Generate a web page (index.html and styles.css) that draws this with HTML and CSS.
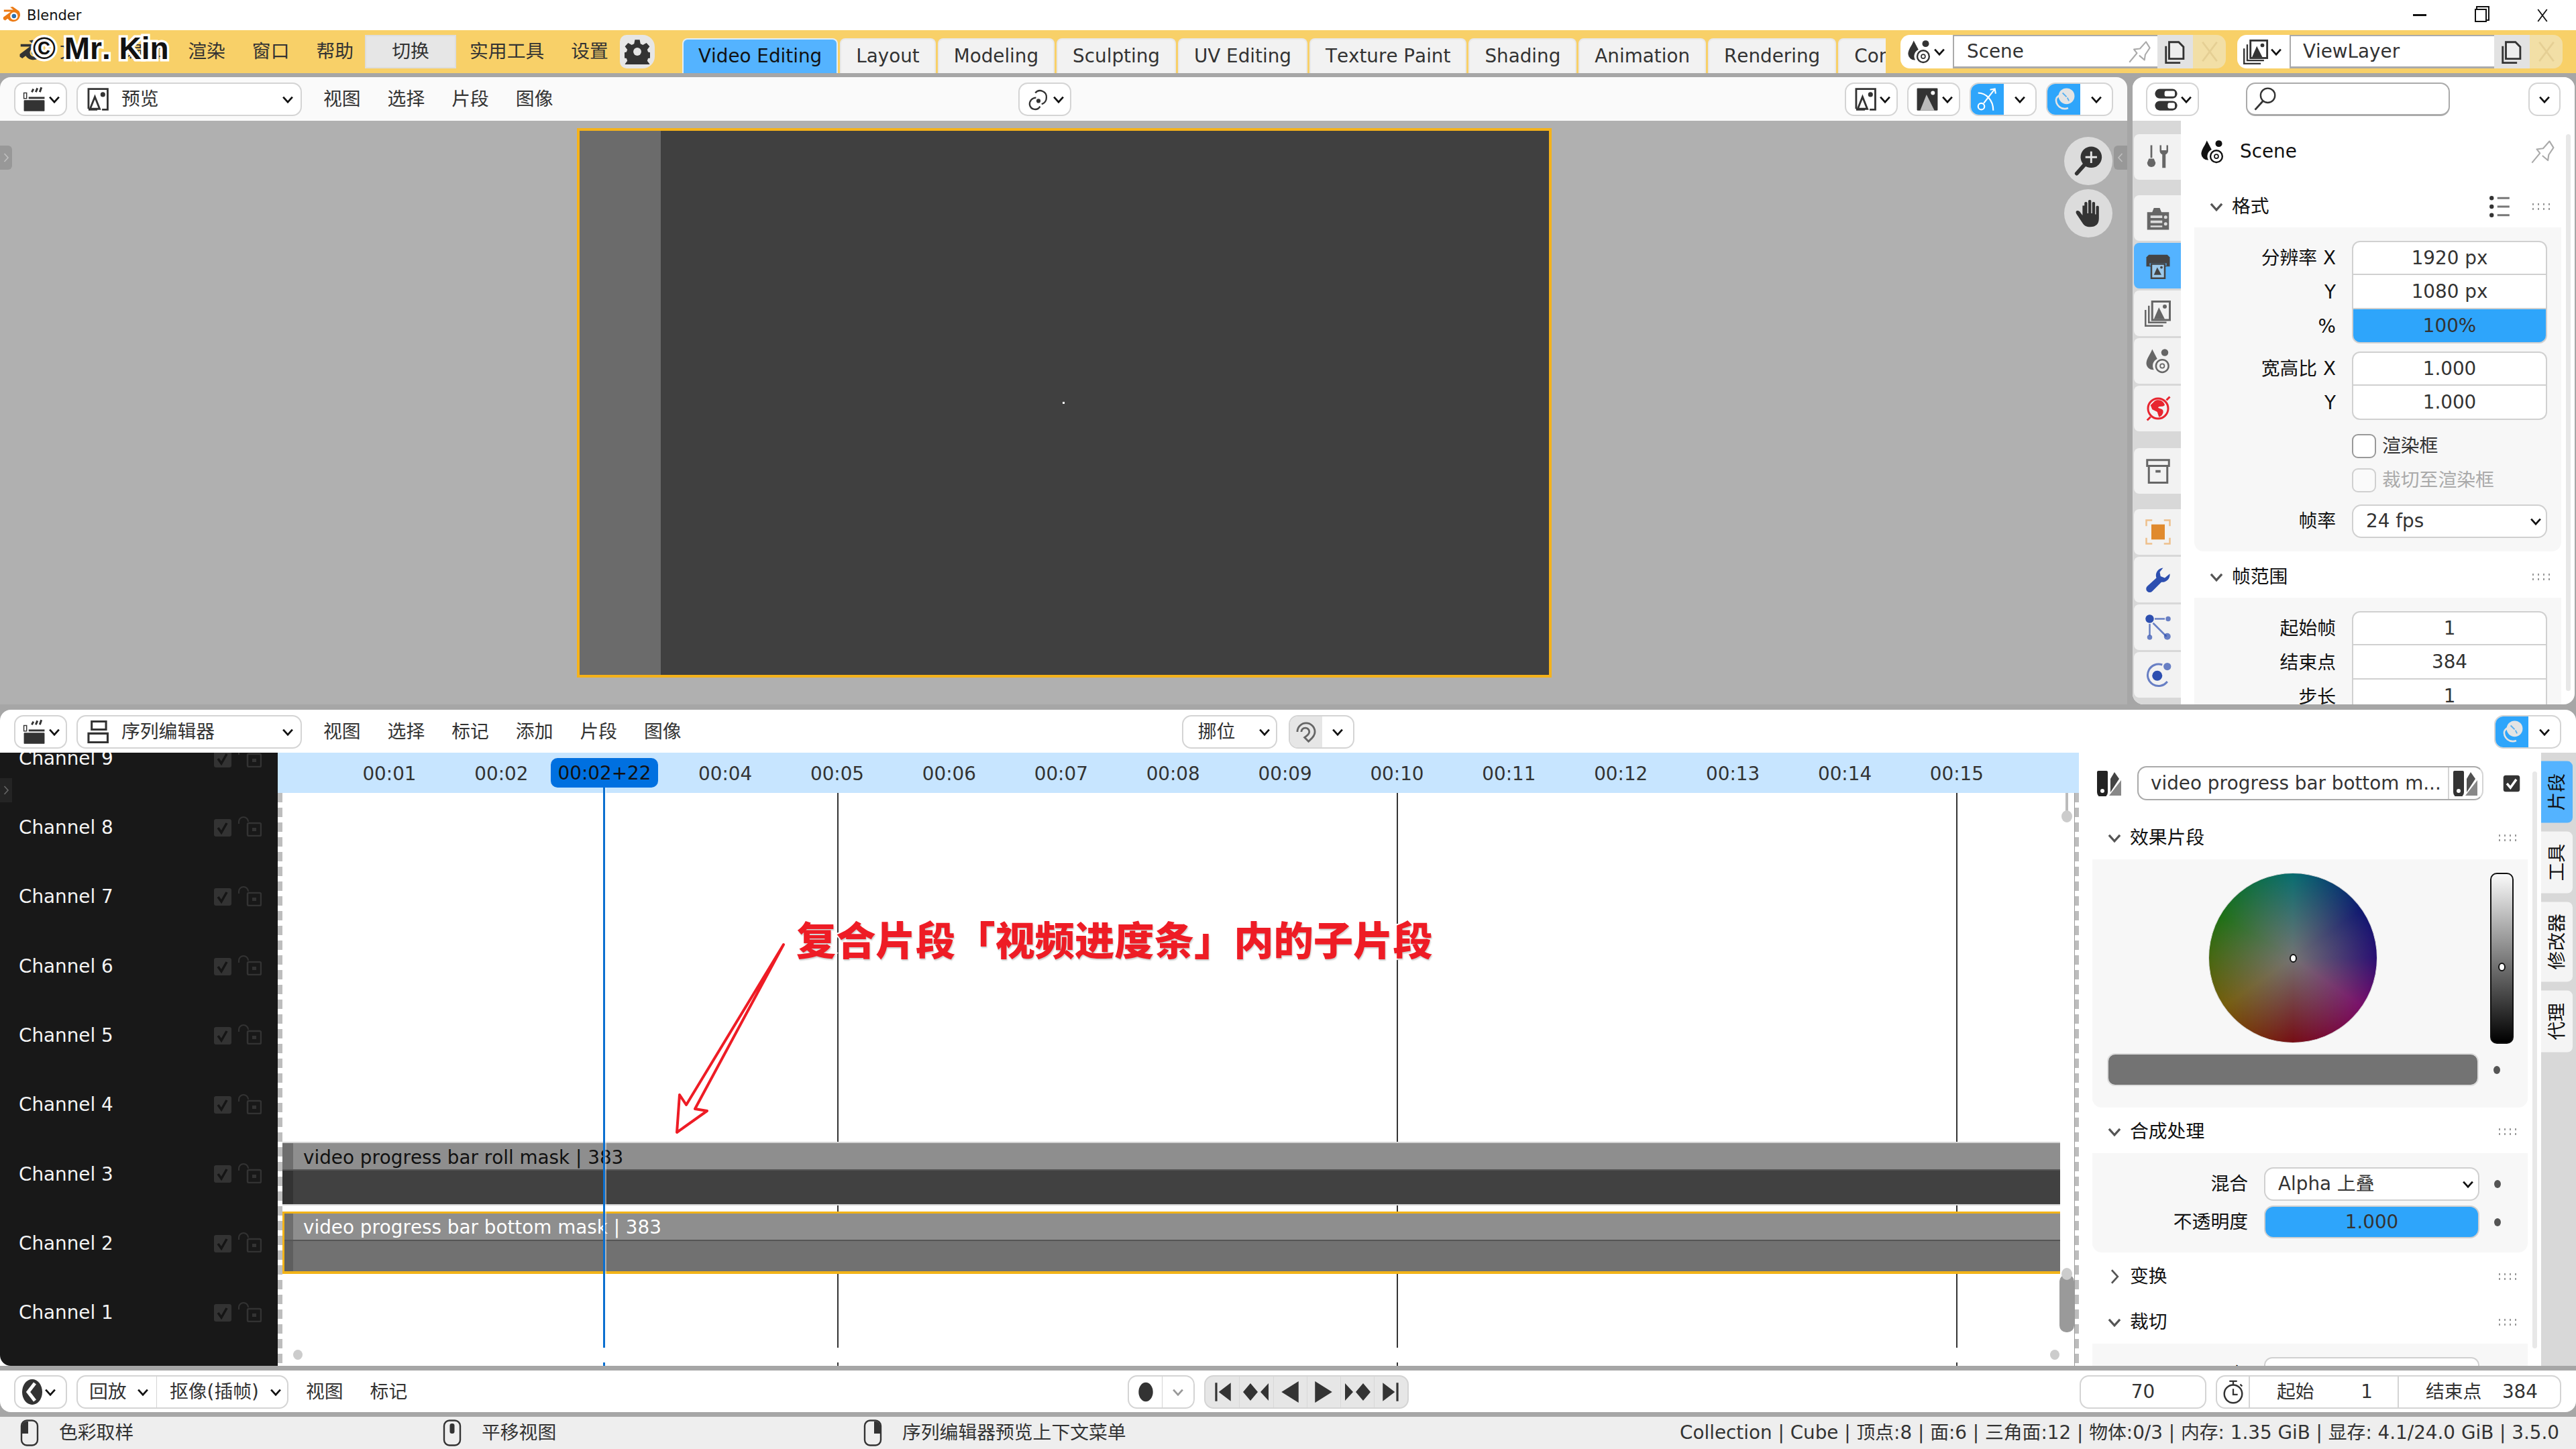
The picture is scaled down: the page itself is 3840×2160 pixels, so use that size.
FILE: index.html
```html
<!DOCTYPE html>
<html lang="zh-CN">
<head>
    <meta charset="UTF-8">
    <title>Blender</title>
    <link rel="stylesheet" href="styles.css">
</head>
<body>
    <svg class="sprites" width="0" height="0">
        <symbol id="i-blender" viewBox="0 0 32 32"><path d="M2 19 14 10 3 10 3 7 18 7 13 3 17 2 27 9a10.500 10.500 0 1 1-18 12L5 24 2 22z"/><circle cx="19" cy="17" r="6" fill="#fff"/><circle cx="19" cy="17" r="3.500" fill="#2a6fb0"/></symbol>
        <symbol id="i-logo-dark" viewBox="0 0 32 32"><path d="M2 19 14 10 3 10 3 7 18 7 13 3 17 2 27 9a10.500 10.500 0 1 1-18 12L5 24 2 22z"/><circle cx="19" cy="17" r="5" fill="#f8d068"/><circle cx="19" cy="17" r="3"/></symbol>
        <symbol id="i-chev" viewBox="0 0 16 16"><path d="M3 5.500 8 11l5-5.500" fill="none" stroke="currentColor" stroke-width="2"/></symbol>
        <symbol id="i-chev-right" viewBox="0 0 16 16"><path d="M5.500 2 11 8l-5.500 6" fill="none" stroke="currentColor" stroke-width="1.600"/></symbol>
        <symbol id="i-clapper" viewBox="0 0 32 32"><rect x="3" y="17" width="26" height="14" rx="1"/><rect x="9" y="13" width="20" height="2.500"/><rect x="3" y="8" width="3.500" height="7" fill="none" stroke="currentColor" stroke-width="1.200"/><path d="M13 7l2-4M18 7l2-5M23 7l2-6" stroke="currentColor" stroke-width="2.500" fill="none"/></symbol>
        <symbol id="i-image" viewBox="0 0 32 32"><path d="M5 28V3h24v26H22M5 29h11" fill="none" stroke="currentColor" stroke-width="2.400"/><circle cx="23" cy="10" r="3"/><path d="M7 28 13 13l6 15z" fill="none" stroke="currentColor" stroke-width="2.400"/></symbol>
        <symbol id="i-image-dark" viewBox="0 0 32 32"><rect x="3" y="2" width="26" height="28" rx="1"/><circle cx="23" cy="8" r="2.500" fill="#fff"/><path d="M7 30 15 10 25 30z" fill="#bbb"/></symbol>
        <symbol id="i-seq" viewBox="0 0 32 32"><path d="M9 13V3h18v10zM5 29V18h24v11z" fill="none" stroke="currentColor" stroke-width="2.600"/></symbol>
        <symbol id="i-link" viewBox="0 0 32 32"><path d="M12 8a8 8 0 0 1 14 6 8 8 0 0 1-6 8M13 14a8 8 0 0 0-8 9 7 7 0 0 0 13 2" fill="none" stroke="currentColor" stroke-width="2"/><circle cx="16" cy="18" r="2.600"/></symbol>
        <symbol id="i-gizmo" viewBox="0 0 32 32"><path d="M4 8C14 8 23 17 23 30" fill="none" stroke="#fff" stroke-width="1.800"/><path d="M11 21 25 3M19 4l6-1 1 6" fill="none" stroke="#fff" stroke-width="1.800"/><circle cx="8" cy="25" r="4" fill="none" stroke="#fff" stroke-width="1.800"/></symbol>
        <symbol id="i-overlay" viewBox="0 0 32 32"><circle cx="19" cy="12" r="10" fill="#e4e4e4"/><path d="M6 15a11 11 0 0 0 15 12" fill="none" stroke="#e4e4e4" stroke-width="2.200"/><path d="M6 15a12 12 0 0 1 7-5" fill="none" stroke="#e4e4e4" stroke-width="2.200"/><path d="M14 8l5 5M20 14l2 4" stroke="#5ab0f0" stroke-width="1.600"/></symbol>
        <symbol id="i-scene" viewBox="0 0 32 32"><path d="M9 2C7 8 2 13 2 19a8 8 0 0 0 9 7.500 9 9 0 0 1 4-13z"/><circle cx="24" cy="6" r="4.200"/><circle cx="21" cy="22" r="7.500" fill="none" stroke="currentColor" stroke-width="2"/><circle cx="21" cy="22" r="2.500" fill="none" stroke="currentColor" stroke-width="1.400"/></symbol>
        <symbol id="i-pin" viewBox="0 0 32 32"><path d="M2 30 12 18 8 13l8-1L24 3l5 8-6 9-1 7-7-6" fill="none" stroke="currentColor" stroke-width="1.800" stroke-linejoin="round"/></symbol>
        <symbol id="i-copy" viewBox="0 0 32 32"><path d="M8 4h12l6 6v15H8z" fill="#eee" stroke="currentColor" stroke-width="2.400"/><path d="M4 9v21h18" fill="none" stroke="currentColor" stroke-width="2.400"/></symbol>
        <symbol id="i-x" viewBox="0 0 32 32"><path d="M7 4l18 24M25 4 7 28" fill="none" stroke="currentColor" stroke-width="2.400"/></symbol>
        <symbol id="i-layers" viewBox="0 0 32 32"><rect x="9" y="2" width="21" height="22" fill="none" stroke="currentColor" stroke-width="2.400"/><path d="M11 23 17 9l7 14z"/><circle cx="24" cy="8" r="2.400"/><path d="M5 7v20h21M1 12v19h21" fill="none" stroke="currentColor" stroke-width="2"/></symbol>
        <symbol id="i-toggles" viewBox="0 0 32 32"><rect x="2" y="3" width="28" height="12" rx="6"/><rect x="14" y="5.500" width="13" height="7" rx="2" fill="#fff"/><rect x="2" y="18" width="28" height="12" rx="6"/><rect x="18" y="20.500" width="9" height="7" rx="2" fill="#fff"/></symbol>
        <symbol id="i-search" viewBox="0 0 32 32"><circle cx="19" cy="12" r="9" fill="none" stroke="currentColor" stroke-width="2"/><path d="M13 19 3 30" stroke="currentColor" stroke-width="2.400"/></symbol>
        <symbol id="i-tool" viewBox="0 0 32 32"><path d="M8 2v15" stroke="currentColor" stroke-width="2.200"/><path d="M5 18h6l2 5a5 5 0 0 1-10 0z"/><path d="M18 2v7a5 5 0 0 0 3 4v16h4V13a5 5 0 0 0 3-4V2l-2 0v6h-6V2z"/></symbol>
        <symbol id="i-render" viewBox="0 0 32 32"><path d="M3 9h6l2-5h7l2 5h9v21H3z"/><rect x="7" y="13" width="14" height="3" fill="#ddd"/><rect x="7" y="19" width="14" height="3" fill="#ddd"/><rect x="7" y="25" width="14" height="2" fill="#ddd"/><circle cx="25" cy="15" r="2" fill="#ddd"/><circle cx="25" cy="23" r="2" fill="#ddd"/></symbol>
        <symbol id="i-output" viewBox="0 0 32 32"><path d="M5 3h22l3 3v11H2V6z"/><rect x="6" y="13" width="20" height="3" fill="#54b3ff"/><path d="M8 14h16v17H8z" fill="#9cc9ea" stroke="currentColor" stroke-width="2"/><path d="M11 27 15 18l5 9z"/><circle cx="20" cy="18" r="1.500"/></symbol>
        <symbol id="i-object" viewBox="0 0 32 32"><path d="M2 9V2h7M23 2h7v7M30 23v7h-7M9 30H2v-7" fill="none" stroke="#eec08c" stroke-width="2"/><rect x="8" y="7" width="16" height="18" fill="#e08a2e"/></symbol>
        <symbol id="i-collection" viewBox="0 0 32 32"><path d="M3 3h26v7H3zM5 10v20h22V10" fill="none" stroke="currentColor" stroke-width="2.400"/><rect x="13" y="15" width="6" height="3"/></symbol>
        <symbol id="i-world" viewBox="0 0 32 32"><circle cx="16" cy="16" r="12" fill="none" stroke="currentColor" stroke-width="2.400"/><path d="M12 7c5-3 11 0 12 5-3 3-7 0-8 3 3 2 7 1 6 6-1 3-3 5-5 5l-2-6-6-3-2-5z"/><path d="M3 30 7 26M26 6l4-4" stroke="currentColor" stroke-width="2.400"/></symbol>
        <symbol id="i-wrench" viewBox="0 0 32 32"><path d="M22 2a9 9 0 0 0-8 12L3 24a4 4 0 0 0 6 6l11-11a9 9 0 0 0 10-10l-6 5-5-2-1-5z"/></symbol>
        <symbol id="i-particles" viewBox="0 0 32 32"><circle cx="6" cy="6" r="5"/><path d="M12 6h12M6 12v14M10 11l16 16" stroke="currentColor" stroke-width="2" opacity=".7"/><circle cx="28" cy="6" r="3" opacity=".7"/><circle cx="6" cy="28" r="3" opacity=".7"/><circle cx="27" cy="27" r="4" opacity=".7"/></symbol>
        <symbol id="i-physics" viewBox="0 0 32 32"><circle cx="15" cy="17" r="6"/><path d="M21 4a13 13 0 1 0 6 20" fill="none" stroke="currentColor" stroke-width="2.400" opacity=".7"/><circle cx="27" cy="6" r="4.500" opacity=".7"/></symbol>
        <symbol id="i-list" viewBox="0 0 32 32"><circle cx="4" cy="4" r="3"/><circle cx="4" cy="16" r="3"/><circle cx="4" cy="28" r="3"/><path d="M12 4h17M12 16h17M12 28h17" stroke="#777" stroke-width="2.800"/></symbol>
        <symbol id="i-zoom" viewBox="0 0 32 32"><circle cx="19" cy="12" r="11"/><path d="M19 6v12M13 12h12" stroke="#e4e4e4" stroke-width="2"/><path d="M12 20 4 29" stroke="currentColor" stroke-width="4" stroke-linecap="round"/></symbol>
        <symbol id="i-hand" viewBox="0 0 32 32"><path d="M9 8v10L6 14c-3-2-5 0-3 3l6 9c2 3 4 4 8 4 6 0 9-3 9-9V9a1.700 1.700 0 0 0-3 0v8h-1V5a1.700 1.700 0 0 0-3 0v11h-1V3a1.700 1.700 0 0 0-3 0v13h-1V5a1.700 1.700 0 0 0-3 0v3z" transform="translate(1 0)"/></symbol>
        <symbol id="i-check" viewBox="0 0 32 32"><rect x="2" y="2" width="28" height="28" rx="4"/><path d="M8 16l6 7 10-14" fill="none" stroke="#fff" stroke-width="4"/></symbol>
        <symbol id="i-check-dim" viewBox="0 0 26 26"><rect width="26" height="26" rx="3" fill="#333"/><path d="M6 13l5 7 8-14" fill="none" stroke="#151515" stroke-width="3.500"/></symbol>
        <symbol id="i-lock" viewBox="0 0 36 30"><path d="M2 11V8a7 7 0 0 1 14 0" fill="none" stroke="#333" stroke-width="2"/><rect x="15" y="10" width="20" height="19" rx="2" fill="none" stroke="#333" stroke-width="2.500"/><rect x="22" y="17" width="6" height="5" fill="#333"/></symbol>
        <symbol id="i-strip" viewBox="0 0 38 38"><path d="M0 2a2 2 0 0 1 2-2h12a2 2 0 0 1 2 2v30a6 6 0 0 1-16 0z"/><circle cx="8" cy="30" r="3" fill="#fff"/><path d="M20 12 26 2l7 10-13 20z" opacity=".85"/><path d="M18 37 36 14v23z" fill="#888"/></symbol>
        <symbol id="i-back" viewBox="0 0 32 40"><ellipse cx="16" cy="20" rx="15" ry="19"/><path d="M20 7 10 20l10 13" fill="none" stroke="#fff" stroke-width="5"/></symbol>
        <symbol id="i-clock" viewBox="0 0 32 40"><circle cx="16" cy="23" r="14" fill="none" stroke="currentColor" stroke-width="2.600"/><path d="M10 3h12M16 3v6M16 15v9h7M27 8l3 3" fill="none" stroke="currentColor" stroke-width="2.400"/></symbol>
        <symbol id="i-mouse-left" viewBox="0 0 28 40"><rect x="2" y="1.500" width="24" height="37" rx="8" fill="none" stroke="currentColor" stroke-width="2.400"/><path d="M3 9a6 6 0 0 1 6-6h3v18H3z"/></symbol>
        <symbol id="i-mouse-mid" viewBox="0 0 28 40"><rect x="2" y="1.500" width="24" height="37" rx="8" fill="none" stroke="currentColor" stroke-width="2.400"/><rect x="10.500" y="6" width="7" height="15" rx="3"/></symbol>
        <symbol id="i-mouse-right" viewBox="0 0 28 40"><rect x="2" y="1.500" width="24" height="37" rx="8" fill="none" stroke="currentColor" stroke-width="2.400"/><path d="M25 9a6 6 0 0 0-6-6h-3v18h9z"/></symbol>
        <symbol id="i-jump-start" viewBox="0 0 32 32"><path d="M6 3h3v26H6zM28 3v26L11 16z"/></symbol>
        <symbol id="i-key-prev" viewBox="0 0 40 32"><path d="M11 3 0 16l11 13 11-13zM26 16 38 3v26z"/></symbol>
        <symbol id="i-play-back" viewBox="0 0 32 32"><path d="M28 1v30L4 16z"/></symbol>
        <symbol id="i-play" viewBox="0 0 32 32"><path d="M4 1v30l24-15z"/></symbol>
        <symbol id="i-key-next" viewBox="0 0 40 32"><path d="M29 3l11 13-11 13-11-13zM14 16 2 3v26z"/></symbol>
        <symbol id="i-jump-end" viewBox="0 0 32 32"><path d="M26 3h-3v26h3zM4 3v26l17-13z"/></symbol>
    </svg>

    <div class="titlebar">
        <svg class="title-logo"><use href="#i-blender"/></svg>
        <span class="title-name">Blender</span>
        <div class="window-btns">
            <span class="win-min"></span>
            <span class="win-max"></span>
            <svg class="win-close"><use href="#i-x"/></svg>
        </div>
    </div>

    <div class="topbar">
        <div class="top-menu">
            <svg class="top-logo"><use href="#i-logo-dark"/></svg>
            <span class="item">文件</span>
            <span class="item">编辑</span>
            <span class="item">渲染</span>
            <span class="item">窗口</span>
            <span class="item">帮助</span>
            <span class="item item-switch">切换</span>
            <span class="item">实用工具</span>
            <span class="item">设置</span>
            <span class="gear-btn">
                <svg class="gear" viewBox="0 0 32 32"><path d="M13 1h6l1 5 3 1.500 4.500-2.500 4 4.500-3 4 1 3 4.500 1v6l-4.500 1-1 3 3 4-4 4.500-4.500-2.500-3 1.500-1 5h-6l-1-5-3-1.500-4.500 2.500-4-4.500 3-4-1-3-4.500-1v-6l4.500-1 1-3-3-4 4-4.500 4.500 2.500 3-1.500z"/><circle cx="16" cy="16" r="5" fill="#e4e4e4"/></svg>
            </span>
            <span class="watermark">© Mr. Kin</span>
        </div>
        <div class="tabs">
            <span class="tab tab-active">Video Editing</span>
            <span class="tab">Layout</span>
            <span class="tab">Modeling</span>
            <span class="tab">Sculpting</span>
            <span class="tab">UV Editing</span>
            <span class="tab">Texture Paint</span>
            <span class="tab">Shading</span>
            <span class="tab">Animation</span>
            <span class="tab">Rendering</span>
            <span class="tab">Compositing</span>
        </div>
        <div class="datablock datablock-scene">
            <span class="db-icon"><svg class="ico"><use href="#i-scene"/></svg><svg class="chev"><use href="#i-chev"/></svg></span>
            <span class="db-name">Scene<svg class="db-pin"><use href="#i-pin"/></svg></span>
            <span class="db-copy"><svg class="ico"><use href="#i-copy"/></svg></span>
            <span class="db-x"><svg class="ico"><use href="#i-x"/></svg></span>
        </div>
        <div class="datablock">
            <span class="db-icon"><svg class="ico"><use href="#i-layers"/></svg><svg class="chev"><use href="#i-chev"/></svg></span>
            <span class="db-name db-name-pad">ViewLayer</span>
            <span class="db-copy"><svg class="ico"><use href="#i-copy"/></svg></span>
            <span class="db-x"><svg class="ico"><use href="#i-x"/></svg></span>
        </div>
    </div>

    <div class="upper">
        <div class="preview-area">
            <div class="header preview-header">
                <span class="btn btn-editor"><svg class="ico"><use href="#i-clapper"/></svg><svg class="chev"><use href="#i-chev"/></svg></span>
                <span class="btn btn-select"><svg class="ico"><use href="#i-image"/></svg><span class="select-text">预览</span><svg class="chev"><use href="#i-chev"/></svg></span>
                <span class="item">视图</span>
                <span class="item">选择</span>
                <span class="item">片段</span>
                <span class="item">图像</span>
                <span class="spacer preview-spacer"></span>
                <span class="btn btn-small"><svg class="ico"><use href="#i-link"/></svg><svg class="chev"><use href="#i-chev"/></svg></span>
                <span class="spacer"></span>
                <span class="btn btn-small"><svg class="ico"><use href="#i-image"/></svg><svg class="chev"><use href="#i-chev"/></svg></span>
                <span class="btn btn-small"><svg class="ico"><use href="#i-image-dark"/></svg><svg class="chev"><use href="#i-chev"/></svg></span>
                <span class="btn btn-toggle"><span class="toggle-on"><svg class="ico"><use href="#i-gizmo"/></svg></span><span class="toggle-off"><svg class="chev"><use href="#i-chev"/></svg></span></span>
                <span class="btn btn-toggle"><span class="toggle-on"><svg class="ico"><use href="#i-overlay"/></svg></span><span class="toggle-off"><svg class="chev"><use href="#i-chev"/></svg></span></span>
            </div>
            <div class="preview-body">
                <span class="edge-arrow edge-left"><svg><use href="#i-chev-right"/></svg></span>
                <div class="frame">
                    <div class="frame-band"></div>
                    <div class="frame-main"><span class="frame-dot"></span></div>
                </div>
                <div class="gizmos">
                    <span class="gizmo"><svg><use href="#i-zoom"/></svg></span>
                    <span class="gizmo"><svg><use href="#i-hand"/></svg></span>
                </div>
                <span class="edge-arrow edge-right"><svg><use href="#i-chev-right"/></svg></span>
            </div>
        </div>

        <div class="props-area">
            <div class="header props-header">
                <span class="btn btn-editor"><svg class="ico"><use href="#i-toggles"/></svg><svg class="chev"><use href="#i-chev"/></svg></span>
                <span class="search"><svg class="ico"><use href="#i-search"/></svg></span>
                <span class="btn btn-chev"><svg class="chev"><use href="#i-chev"/></svg></span>
            </div>
            <div class="props-body">
                <div class="props-tabs">
                    <span class="ptab ptab-first ptab-grey"><svg><use href="#i-tool"/></svg></span>
                    <span class="ptab ptab-group ptab-grey"><svg><use href="#i-render"/></svg></span>
                    <span class="ptab ptab-active"><svg><use href="#i-output"/></svg></span>
                    <span class="ptab ptab-grey"><svg><use href="#i-layers"/></svg></span>
                    <span class="ptab ptab-grey"><svg><use href="#i-scene"/></svg></span>
                    <span class="ptab ptab-red"><svg><use href="#i-world"/></svg></span>
                    <span class="ptab ptab-group ptab-collection ptab-grey"><svg><use href="#i-collection"/></svg></span>
                    <span class="ptab ptab-group"><svg><use href="#i-object"/></svg></span>
                    <span class="ptab ptab-blue"><svg><use href="#i-wrench"/></svg></span>
                    <span class="ptab ptab-blue"><svg><use href="#i-particles"/></svg></span>
                    <span class="ptab ptab-blue"><svg><use href="#i-physics"/></svg></span>
                </div>
                <div class="props-main">
                    <div class="scene-row">
                        <svg class="ico"><use href="#i-scene"/></svg>
                        <span class="scene-name">Scene</span>
                        <svg class="scene-pin"><use href="#i-pin"/></svg>
                    </div>
                    <div class="panel-head props-head">
                        <svg class="head-chev"><use href="#i-chev"/></svg>
                        <span class="head-text">格式</span>
                        <svg class="head-list"><use href="#i-list"/></svg>
                        <span class="grip"></span>
                    </div>
                    <div class="panel props-panel">
                        <div class="prop-row"><span class="prop-label">分辨率 X</span><span class="field field-top">1920 px</span></div>
                        <div class="prop-row"><span class="prop-label">Y</span><span class="field field-mid">1080 px</span></div>
                        <div class="prop-row"><span class="prop-label">%</span><span class="field field-bottom field-blue">100%</span></div>
                        <div class="prop-row prop-row-gap"><span class="prop-label">宽高比 X</span><span class="field field-top">1.000</span></div>
                        <div class="prop-row"><span class="prop-label">Y</span><span class="field field-bottom">1.000</span></div>
                        <div class="prop-row check-row check-row-first"><span></span><span class="check-wrap"><span class="check-box"></span>渲染框</span></div>
                        <div class="prop-row check-row check-row-dim"><span></span><span class="check-wrap"><span class="check-box"></span>裁切至渲染框</span></div>
                        <div class="prop-row prop-row-gap-fps"><span class="prop-label">帧率</span><span class="field field-select">24 fps<svg class="chev"><use href="#i-chev"/></svg></span></div>
                    </div>
                    <div class="panel-head props-head">
                        <svg class="head-chev"><use href="#i-chev"/></svg>
                        <span class="head-text">帧范围</span>
                        <span class="grip grip-auto"></span>
                    </div>
                    <div class="panel props-panel">
                        <div class="prop-row"><span class="prop-label">起始帧</span><span class="field field-top">1</span></div>
                        <div class="prop-row"><span class="prop-label">结束点</span><span class="field field-mid">384</span></div>
                        <div class="prop-row"><span class="prop-label">步长</span><span class="field field-mid">1</span></div>
                    </div>
                    <span class="scrollbar scrollbar-props"></span>
                </div>
            </div>
        </div>
    </div>

    <div class="seq-area">
        <div class="header">
            <span class="btn btn-editor"><svg class="ico"><use href="#i-clapper"/></svg><svg class="chev"><use href="#i-chev"/></svg></span>
            <span class="btn btn-select"><svg class="ico"><use href="#i-seq"/></svg><span class="select-text">序列编辑器</span><svg class="chev"><use href="#i-chev"/></svg></span>
            <span class="item">视图</span>
            <span class="item">选择</span>
            <span class="item">标记</span>
            <span class="item">添加</span>
            <span class="item">片段</span>
            <span class="item">图像</span>
            <span class="spacer seq-spacer"></span>
            <span class="btn btn-shift">挪位<svg class="chev"><use href="#i-chev"/></svg></span>
            <span class="btn btn-snap"><span class="snap-on"><svg class="ico" viewBox="0 0 32 32"><path d="M5 16a11 11 0 0 1 22 0c0 6-5 9-8 12l-5-5c3-2 6-4 6-7a5 5 0 0 0-10 0" fill="none" stroke="#666" stroke-width="2.400"/></svg></span><span class="snap-off"><svg class="chev"><use href="#i-chev"/></svg></span></span>
            <span class="spacer"></span>
            <span class="btn btn-toggle"><span class="toggle-on"><svg class="ico"><use href="#i-overlay"/></svg></span><span class="toggle-off"><svg class="chev"><use href="#i-chev"/></svg></span></span>
        </div>
        <div class="seq-body">
            <div class="channels">
                <div class="channel"><span class="channel-name">Channel 9</span><svg class="ch-check"><use href="#i-check-dim"/></svg><svg class="ch-lock"><use href="#i-lock"/></svg></div>
                <div class="channel"><span class="channel-name">Channel 8</span><svg class="ch-check"><use href="#i-check-dim"/></svg><svg class="ch-lock"><use href="#i-lock"/></svg></div>
                <div class="channel"><span class="channel-name">Channel 7</span><svg class="ch-check"><use href="#i-check-dim"/></svg><svg class="ch-lock"><use href="#i-lock"/></svg></div>
                <div class="channel"><span class="channel-name">Channel 6</span><svg class="ch-check"><use href="#i-check-dim"/></svg><svg class="ch-lock"><use href="#i-lock"/></svg></div>
                <div class="channel"><span class="channel-name">Channel 5</span><svg class="ch-check"><use href="#i-check-dim"/></svg><svg class="ch-lock"><use href="#i-lock"/></svg></div>
                <div class="channel"><span class="channel-name">Channel 4</span><svg class="ch-check"><use href="#i-check-dim"/></svg><svg class="ch-lock"><use href="#i-lock"/></svg></div>
                <div class="channel"><span class="channel-name">Channel 3</span><svg class="ch-check"><use href="#i-check-dim"/></svg><svg class="ch-lock"><use href="#i-lock"/></svg></div>
                <div class="channel"><span class="channel-name">Channel 2</span><svg class="ch-check"><use href="#i-check-dim"/></svg><svg class="ch-lock"><use href="#i-lock"/></svg></div>
                <div class="channel"><span class="channel-name">Channel 1</span><svg class="ch-check"><use href="#i-check-dim"/></svg><svg class="ch-lock"><use href="#i-lock"/></svg></div>
                <span class="edge-arrow edge-channels"><svg><use href="#i-chev-right"/></svg></span>
            </div>
            <div class="canvas">
                <div class="ruler">
                    <span class="tick">00:01</span>
                    <span class="tick">00:02</span>
                    <span class="tick"></span>
                    <span class="tick">00:04</span>
                    <span class="tick">00:05</span>
                    <span class="tick">00:06</span>
                    <span class="tick">00:07</span>
                    <span class="tick">00:08</span>
                    <span class="tick">00:09</span>
                    <span class="tick">00:10</span>
                    <span class="tick">00:11</span>
                    <span class="tick">00:12</span>
                    <span class="tick">00:13</span>
                    <span class="tick">00:14</span>
                    <span class="tick">00:15</span>
                </div>
                <span class="checker checker-left"></span>
                <span class="checker checker-right"></span>
                <span class="vline vline-5"></span>
                <span class="vline vline-10"></span>
                <span class="vline vline-15"></span>
                <div class="strip strip-roll">
                    <div class="strip-title">video progress bar roll mask | 383</div>
                    <div class="strip-body"></div>
                </div>
                <div class="strip strip-bottom">
                    <div class="strip-title">video progress bar bottom mask | 383</div>
                    <div class="strip-body"></div>
                </div>
                <span class="playhead"></span>
                <span class="hgap"></span>
                <span class="frame-badge">00:02+22</span>
                <span class="vscroll-line"></span>
                <span class="knob knob-top"></span>
                <span class="knob knob-mid"></span>
                <span class="vscroll"></span>
                <span class="knob knob-left"></span>
                <span class="knob knob-right"></span>
                <div class="note">复合片段「视频进度条」内的子片段</div>
                <svg class="note-arrow" viewBox="0 0 180 300"><path d="M170 4 25 243 15 228 11 284 56 252 38 249z" fill="#fff" stroke="#ee1c25" stroke-width="4" stroke-linejoin="round"/></svg>
            </div>
            <div class="sidebar">
                <div class="side-main">
                    <div class="side-top">
                        <svg class="side-icon"><use href="#i-strip"/></svg>
                        <span class="side-input">
                            <span class="side-input-text">video progress bar bottom m...</span>
                            <span class="side-input-icon"><svg class="side-icon-small"><use href="#i-strip"/></svg></span>
                        </span>
                        <svg class="side-check"><use href="#i-check"/></svg>
                    </div>
                    <div class="panel-head">
                        <svg class="head-chev"><use href="#i-chev"/></svg>
                        <span class="head-text">效果片段</span>
                        <span class="grip grip-auto"></span>
                    </div>
                    <div class="panel color-panel">
                        <div class="wheel-row">
                            <div class="wheel"><span class="wheel-dot"></span></div>
                            <div class="value-bar"><span class="wheel-dot"></span></div>
                        </div>
                        <div class="swatch-row">
                            <span class="swatch"></span>
                            <span class="anim-dot"></span>
                        </div>
                    </div>
                    <div class="panel-head">
                        <svg class="head-chev"><use href="#i-chev"/></svg>
                        <span class="head-text">合成处理</span>
                        <span class="grip grip-auto"></span>
                    </div>
                    <div class="panel comp-panel">
                        <div class="side-row">
                            <span class="prop-label">混合</span>
                            <span class="field field-select field-round">Alpha 上叠<svg class="chev"><use href="#i-chev"/></svg></span>
                            <span class="anim-dot"></span>
                        </div>
                        <div class="side-row">
                            <span class="prop-label">不透明度</span>
                            <span class="field field-round field-blue">1.000</span>
                            <span class="anim-dot"></span>
                        </div>
                    </div>
                    <div class="panel-head">
                        <svg class="head-chev-right"><use href="#i-chev-right"/></svg>
                        <span class="head-text">变换</span>
                        <span class="grip grip-auto"></span>
                    </div>
                    <div class="panel-head">
                        <svg class="head-chev"><use href="#i-chev"/></svg>
                        <span class="head-text">裁切</span>
                        <span class="grip grip-auto"></span>
                    </div>
                    <div class="panel crop-panel">
                        <div class="side-row">
                            <span class="prop-label">左</span>
                            <span class="field field-top">0</span>
                        </div>
                    </div>
                    <span class="scrollbar scrollbar-side"></span>
                </div>
                <div class="side-tabs">
                    <span class="stab stab-active">片段</span>
                    <span class="stab">工具</span>
                    <span class="stab">修改器</span>
                    <span class="stab">代理</span>
                </div>
            </div>
        </div>
    </div>

    <div class="timeline">
        <span class="btn btn-editor"><svg class="ico ico-back"><use href="#i-back"/></svg><svg class="chev"><use href="#i-chev"/></svg></span>
        <span class="btn btn-pair">
            <span class="pair-a">回放<svg class="chev"><use href="#i-chev"/></svg></span>
            <span class="pair-b">抠像(插帧)<svg class="chev"><use href="#i-chev"/></svg></span>
        </span>
        <span class="item">视图</span>
        <span class="item">标记</span>
        <span class="spacer tl-spacer"></span>
        <span class="btn btn-record">
            <span class="rec-a"><svg class="rec-dot" viewBox="0 0 20 32"><ellipse cx="10" cy="16" rx="9" ry="12"/></svg></span>
            <span class="rec-b"><svg class="chev"><use href="#i-chev"/></svg></span>
        </span>
        <span class="btn btn-play">
            <span class="play-cell"><svg><use href="#i-jump-start"/></svg></span>
            <span class="play-cell"><svg><use href="#i-key-prev"/></svg></span>
            <span class="play-cell"><svg><use href="#i-play-back"/></svg></span>
            <span class="play-cell"><svg><use href="#i-play"/></svg></span>
            <span class="play-cell"><svg><use href="#i-key-next"/></svg></span>
            <span class="play-cell"><svg><use href="#i-jump-end"/></svg></span>
        </span>
        <span class="spacer"></span>
        <span class="btn btn-frame">70</span>
        <span class="btn btn-range">
            <span class="range-clock"><svg><use href="#i-clock"/></svg></span>
            <span class="range-cell range-start"><span>起始</span><span>1</span></span>
            <span class="range-cell range-end"><span>结束点</span><span>384</span></span>
        </span>
    </div>

    <div class="statusbar">
        <span class="hint hint-a"><svg><use href="#i-mouse-left"/></svg>色彩取样</span>
        <span class="hint hint-b"><svg><use href="#i-mouse-mid"/></svg>平移视图</span>
        <span class="hint"><svg><use href="#i-mouse-right"/></svg>序列编辑器预览上下文菜单</span>
        <span class="status-info">Collection | Cube | 顶点:8 | 面:6 | 三角面:12 | 物体:0/3 | 内存: 1.35 GiB | 显存: 4.1/24.0 GiB | 3.5.0</span>
    </div>
</body>
</html>
```

FILE: styles.css
```css
* {
    box-sizing: border-box;
}

body {
    margin: 0;
    width: 3840px;
    height: 2160px;
    overflow: hidden;
    background: #a6a6a6;
    color: #333;
    font-family: "DejaVu Sans", "Noto Sans CJK SC", sans-serif;
    font-size: 27.8px;
    font-kerning: none;
    line-height: 1;
    display: flex;
    flex-direction: column;
}

svg {
    fill: currentColor;
    flex: none;
}

.sprites {
    position: absolute;
}

/* window title */
.titlebar {
    height: 45px;
    background: #fff;
    color: #111;
    display: flex;
    align-items: center;
    padding-left: 3px;
}

.title-logo {
    width: 30px;
    height: 30px;
    color: #ec7a14;
}

.title-name {
    margin-left: 7px;
    font-size: 21px;
    padding-top: 2px;
}

.window-btns {
    margin-left: auto;
    display: flex;
    align-items: center;
}

.win-min {
    width: 20px;
    height: 3px;
    background: #111;
    margin-right: 72px;
}

.win-max {
    width: 18px;
    height: 20px;
    border: 2px solid #111;
    margin-right: 71px;
    box-shadow: 3px -3px 0 -1px #fff, 3px -3px 0 1px #111;
}

.win-close {
    width: 24px;
    height: 24px;
    margin-right: 38px;
}

/* top bar */
.topbar {
    height: 64px;
    background: #f8d068;
    display: flex;
    align-items: stretch;
}

.top-menu {
    position: relative;
    width: 1017px;
    flex: none;
    display: flex;
    align-items: center;
    padding-left: 27px;
}

.top-logo {
    width: 40px;
    height: 40px;
    color: #333;
    margin-right: 2px;
}

.item {
    padding: 0 20px;
    flex: none;
    display: flex;
    align-items: center;
    height: 50px;
}

.item-switch {
    background: #e6e6e6;
    border: 2px solid #ddd;
    width: 136px;
    justify-content: center;
    margin: 0 0 0 -3px;
}

.gear-btn {
    width: 52px;
    height: 50px;
    background: #e6e6e6;
    border-radius: 10px 18px 18px 10px;
    margin-left: -3px;
    display: flex;
    align-items: center;
    justify-content: center;
}

.gear {
    width: 38px;
    height: 38px;
    color: #333;
}

.watermark {
    position: absolute;
    left: 49px;
    top: 2px;
    font-family: "Liberation Sans", sans-serif;
    font-size: 46px;
    font-weight: bold;
    color: #111;
    -webkit-text-stroke: 7px #fff;
    paint-order: stroke fill;
    line-height: 50px;
    white-space: nowrap;
}

.tabs {
    width: 1794px;
    flex: none;
    overflow: hidden;
    display: flex;
    align-items: flex-end;
    gap: 3px;
}

.tab {
    height: 52px;
    padding: 0 22px;
    flex: none;
    background: #f2f2f2;
    border: 2px solid #e8e8e8;
    border-bottom: 0;
    border-radius: 8px 8px 0 0;
    display: flex;
    align-items: center;
    color: #333;
}

.tab-active {
    background: #54b3ff;
    border-color: #e2eef6;
    color: #111;
}

.datablock {
    width: 485px;
    height: 50px;
    align-self: center;
    margin-left: 22px;
    flex: none;
    display: flex;
    border-radius: 14px;
    overflow: hidden;
}

.datablock + .datablock {
    margin-left: 17px;
}

.db-icon {
    width: 78px;
    background: #fff;
    display: flex;
    align-items: center;
    padding-left: 9px;
    color: #333;
}

.db-name {
    width: 305px;
    background: #fff;
    border: 2px solid #aaa;
    border-bottom-width: 3px;
    border-right: 0;
    padding-left: 19px;
    display: flex;
    align-items: center;
    justify-content: space-between;
    padding-right: 8px;
}

.db-pin {
    width: 36px;
    height: 36px;
    color: #aaa;
}

.db-name-pad {
    padding-left: 18px;
}

.db-copy {
    width: 53px;
    background: #e2e2e2;
    display: flex;
    align-items: center;
    justify-content: center;
}

.db-x {
    width: 49px;
    background: #f2dfa6;
    display: flex;
    align-items: center;
    justify-content: center;
}

.ico {
    width: 38px;
    height: 38px;
    color: #333;
}

.db-x .ico {
    color: #e5cf94;
}

.chev {
    width: 22px;
    height: 22px;
    color: #111;
}

/* editor headers */
.upper {
    height: 935px;
    margin-top: 6px;
    display: flex;
    gap: 8px;
}

.preview-area {
    width: 3171px;
    display: flex;
    flex-direction: column;
}

.header {
    height: 65px;
    background: #fafafa;
    flex: none;
    display: flex;
    align-items: center;
    padding-left: 21px;
    border-radius: 16px 16px 0 0;
}

.preview-header {
    padding-right: 7px;
}

.btn {
    height: 50px;
    background: #fff;
    border: 2px solid #d4d4d4;
    border-radius: 14px;
    flex: none;
    display: flex;
    align-items: center;
    overflow: hidden;
}

.btn-editor {
    width: 79px;
    padding-left: 9px;
    margin-right: 14px;
}

.btn-select {
    width: 336px;
    padding: 0 8px 0 10px;
    margin-right: 12px;
}

.select-text {
    margin-left: 17px;
    flex: 1;
}

.btn-small {
    width: 79px;
    padding-left: 9px;
    margin-right: 14px;
}

.spacer {
    flex: 1;
}

.preview-spacer {
    flex: none;
    width: 674px;
}

.btn-toggle {
    width: 100px;
    margin-right: 14px;
}

.toggle-on {
    width: 49px;
    height: 100%;
    background: #2ea5fb;
    display: flex;
    align-items: center;
    justify-content: center;
}

.toggle-off {
    flex: 1;
    display: flex;
    align-items: center;
    justify-content: center;
}

/* preview */
.preview-body {
    flex: 1;
    position: relative;
    background: #b0b0b0;
    padding: 11px 0 0 860px;
}

.frame {
    width: 1453px;
    height: 819px;
    border: 4px solid #f5b21a;
    display: flex;
}

.frame-band {
    width: 121px;
    background: #6b6b6b;
}

.frame-main {
    flex: 1;
    background: #404040;
    position: relative;
}

.frame-dot {
    position: absolute;
    left: 599px;
    top: 404px;
    width: 3px;
    height: 3px;
    background: #fff;
}

.gizmos {
    position: absolute;
    left: 3077px;
    top: 24px;
    display: flex;
    flex-direction: column;
    gap: 6px;
}

.gizmo {
    width: 72px;
    height: 72px;
    border-radius: 50%;
    background: #dcdcdc;
    display: flex;
    align-items: center;
    justify-content: center;
    color: #333;
}

.gizmo svg {
    width: 46px;
    height: 46px;
}

.edge-arrow {
    position: absolute;
    background: #989898;
    display: flex;
    align-items: center;
    justify-content: center;
    color: #c0c0c0;
}

.edge-arrow svg {
    width: 16px;
    height: 20px;
}

.edge-left {
    left: 0;
    top: 37px;
    width: 18px;
    height: 36px;
    border-radius: 0 6px 6px 0;
}

.edge-right {
    right: 0;
    top: 37px;
    width: 20px;
    height: 36px;
    border-radius: 6px 0 0 6px;
}

.edge-right svg {
    transform: scaleX(-1);
}

.edge-channels {
    left: 0;
    top: 38px;
    width: 18px;
    height: 36px;
    background: #242424;
    color: #666;
}

/* properties */
.props-area {
    width: 659px;
    display: flex;
    flex-direction: column;
    background: #fff;
    border-radius: 16px;
    overflow: hidden;
}

.props-header {
    background: #fff;
    padding-left: 20px;
}

.props-header .btn-editor {
    margin-right: 70px;
}

.search {
    width: 304px;
    height: 50px;
    border: 2px solid #aaa;
    border-bottom-width: 3px;
    border-radius: 14px;
    display: flex;
    align-items: center;
    padding-left: 8px;
}

.btn-chev {
    width: 48px;
    margin-left: 117px;
    justify-content: center;
}

.props-body {
    flex: 1;
    display: flex;
    min-height: 0;
}

.props-tabs {
    width: 72px;
    background: #d8d8d8;
    padding: 20px 0 0 2px;
    flex: none;
    display: flex;
    flex-direction: column;
    gap: 3px;
    overflow: hidden;
}

.ptab {
    height: 68px;
    background: #f2f2f2;
    border-radius: 8px 0 0 8px;
    display: flex;
    align-items: center;
    justify-content: center;
    flex: none;
    padding-left: 2px;
}

.ptab svg {
    width: 40px;
    height: 40px;
}

.ptab-group {
    margin-top: 20px;
}

.ptab-collection {
    margin-top: 22px;
}

.ptab-active {
    background: #54b3ff;
    color: #444;
}

.ptab-grey {
    color: #666;
}

.ptab-red {
    color: #e8252f;
}

.ptab-blue {
    color: #2d4fb0;
}

.props-main {
    flex: 1;
    position: relative;
    padding: 0 20px;
}

.scene-row {
    height: 97px;
    display: flex;
    align-items: center;
    color: #111;
    padding: 0 8px 6px 8px;
}

.scene-row .ico {
    color: #111;
}

.scene-name {
    margin-left: 22px;
}

.scene-pin {
    margin-left: auto;
    width: 38px;
    height: 38px;
    color: #aaa;
}

.panel-head {
    height: 64px;
    margin-top: 4px;
    display: flex;
    align-items: center;
    padding: 0 16px 0 20px;
    color: #111;
}

.props-head {
    height: 62px;
    margin-top: 0;
}

.panel + .props-head {
    margin-top: 6px;
    height: 63px;
}

.head-chev {
    width: 26px;
    height: 26px;
    color: #555;
}

.head-chev-right {
    width: 26px;
    height: 26px;
    color: #555;
}

.head-text {
    margin-left: 10px;
}

.head-list {
    width: 34px;
    height: 34px;
    margin-left: auto;
    margin-right: 28px;
    color: #333;
}

.grip {
    width: 30px;
    height: 14px;
    background-image: radial-gradient(#999 1.300px, transparent 1.500px);
    background-size: 8px 7px;
    flex: none;
}

.grip-auto {
    margin-left: auto;
}

.panel {
    background: #f7f7f7;
    border-radius: 0 0 14px 14px;
}

.props-panel {
    padding: 20px 21px 20px 0;
}

.prop-row {
    display: grid;
    grid-template-columns: 211px 291px;
    column-gap: 24px;
    align-items: center;
}

.prop-row-gap {
    margin-top: 12px;
}

.prop-row-gap-fps {
    margin-top: 18px;
}

.prop-label {
    text-align: right;
    color: #111;
}

.field {
    height: 51px;
    background: #fff;
    border: 2px solid #d0d0d0;
    border-top-width: 0;
    display: flex;
    align-items: center;
    justify-content: center;
    color: #333;
}

.field-top {
    border-top-width: 2px;
    border-radius: 12px 12px 0 0;
}

.field-bottom {
    border-radius: 0 0 12px 12px;
}

.field-round {
    border-top-width: 2px;
    border-radius: 14px;
    height: 49px;
}

.field-blue {
    background: #2ea5fb;
}

.field-select {
    height: 50px;
    border-top-width: 2px;
    border-radius: 14px;
    justify-content: space-between;
    padding: 0 4px 0 19px;
}

.check-row {
    height: 37px;
}

.check-row-first {
    margin-top: 20px;
}

.check-row-dim {
    margin-top: 14px;
    color: #aaa;
}

.check-row-dim .check-box {
    border-color: #d0d0d0;
    background: #fafafa;
}

.check-wrap {
    display: flex;
    align-items: center;
    gap: 9px;
}

.check-box {
    width: 36px;
    height: 36px;
    background: #fff;
    border: 2px solid #999;
    border-radius: 9px;
    flex: none;
}

.scrollbar {
    position: absolute;
    width: 7px;
    background: #e8e8e8;
    border-radius: 4px;
}

.scrollbar-props {
    right: 6px;
    top: 20px;
    height: 830px;
}

/* sequencer */
.seq-area {
    height: 978px;
    margin-top: 8px;
    display: flex;
    flex-direction: column;
}

.seq-area .header {
    height: 64px;
    background: #fff;
    padding: 1px 8px 0 21px;
}

.seq-spacer {
    flex: none;
    width: 726px;
}

.btn-shift {
    width: 142px;
    padding: 0 6px 0 22px;
    justify-content: space-between;
    margin-right: 17px;
}

.btn-snap {
    width: 98px;
}

.snap-on {
    width: 48px;
    display: flex;
    justify-content: center;
    background: #e6e6e6;
    height: 100%;
    align-items: center;
}

.snap-off {
    flex: 1;
    display: flex;
    justify-content: center;
}

.seq-body {
    flex: 1;
    display: flex;
    min-height: 0;
    background: #fff;
}

.channels {
    position: relative;
    width: 414px;
    flex: none;
    background: #181818;
    border-radius: 0 0 0 16px;
    overflow: hidden;
}

.channel {
    height: 103.300px;
    display: flex;
    align-items: center;
    padding-left: 28px;
    color: #f4f4f4;
    position: relative;
    top: -43px;
}

.channel-name {
    width: 291px;
}

.ch-check {
    width: 26px;
    height: 26px;
}

.ch-lock {
    width: 36px;
    height: 30px;
    margin-left: 9px;
    margin-top: -3px;
}

.canvas {
    position: relative;
    width: 2685px;
    flex: none;
    overflow: hidden;
    background: #fff;
}

.ruler {
    height: 60px;
    background: #c7e5ff;
    padding: 3px 0 0 83px;
    display: flex;
    align-items: center;
}

.tick {
    width: 166.900px;
    flex: none;
    text-align: center;
    color: #333;
}

.checker {
    position: absolute;
    top: 60px;
    bottom: 0;
    width: 7px;
    background: repeating-linear-gradient(to bottom, #bdbdbd 0 14px, #fff 14px 22px);
}

.checker-left {
    left: 0;
}

.checker-right {
    right: 0;
    border-left: 1px solid #999;
}

.vline {
    position: absolute;
    top: 60px;
    bottom: 0;
    width: 2px;
    background: #333;
}

.vline-5 {
    left: 834px;
}

.vline-10 {
    left: 1668px;
}

.vline-15 {
    left: 2502px;
}

.strip {
    position: absolute;
    left: 7px;
    width: 2650px;
    display: flex;
    flex-direction: column;
}

.strip-title {
    height: 41px;
    background: linear-gradient(to right, #6e6e6e 0 16px, #8e8e8e 16px);
    border-bottom: 2px solid #555;
    padding: 2px 0 0 31px;
    display: flex;
    align-items: center;
}

.strip-body {
    flex: 1;
}

.strip-roll {
    top: 580px;
    height: 95px;
    border-top: 2px solid #d4d4d4;
    border-bottom: 2px solid #d4d4d4;
    color: #111;
}

.strip-roll .strip-title {
    padding-top: 5px;
}

.strip-roll .strip-body {
    background: linear-gradient(to right, #333 0 16px, #414141 16px);
}

.strip-bottom {
    top: 684px;
    height: 93px;
    border: 3px solid #f2b318;
    border-right: 0;
    border-bottom-width: 4px;
    color: #fff;
}

.strip-bottom .strip-title {
    padding-left: 28px;
    background: linear-gradient(to right, #6e6e6e 0 13px, #8e8e8e 13px);
}

.strip-bottom .strip-body {
    background: linear-gradient(to right, #5e5e5e 0 13px, #717171 13px);
}

.playhead {
    position: absolute;
    left: 485px;
    top: 52px;
    bottom: 0;
    width: 3px;
    background: #0a6fd0;
    box-shadow: 2px 0 0 rgba(255, 255, 255, 0.45);
}

.hgap {
    position: absolute;
    left: 7px;
    right: 7px;
    top: 887px;
    height: 22px;
    background: #fff;
}

.frame-badge {
    position: absolute;
    left: 407px;
    top: 8px;
    width: 160px;
    height: 44px;
    padding-top: 2px;
    background: #0070e0;
    border-radius: 10px;
    display: flex;
    align-items: center;
    justify-content: center;
    color: #111;
}

.vscroll-line {
    position: absolute;
    left: 2665px;
    top: 60px;
    width: 4px;
    height: 36px;
    background: #bbb;
}

.knob {
    position: absolute;
    width: 16px;
    height: 16px;
    border-radius: 50%;
    background: #ccc;
}

.knob-top {
    left: 2659px;
    top: 86px;
    height: 18px;
}

.knob-mid {
    left: 2659px;
    top: 768px;
    z-index: 2;
    height: 18px;
}

.vscroll {
    position: absolute;
    left: 2656px;
    top: 778px;
    width: 22px;
    height: 86px;
    background: #9a9a9a;
    border-radius: 10px;
}

.knob-left {
    left: 23px;
    top: 890px;
    width: 14px;
    height: 15px;
}

.knob-right {
    left: 2642px;
    top: 890px;
    width: 14px;
    height: 15px;
}

.note {
    position: absolute;
    left: 773px;
    top: 243px;
    font-family: "Noto Sans CJK SC", sans-serif;
    font-weight: 900;
    font-size: 59.300px;
    line-height: 66px;
    color: #ee1c25;
    white-space: nowrap;
    -webkit-text-stroke: 4px #fff;
    paint-order: stroke fill;
    text-shadow: 1px 2px 2px #ccc;
}

.note-arrow {
    position: absolute;
    left: 584px;
    top: 282px;
    width: 180px;
    height: 300px;
    overflow: visible;
}

/* sidebar */
.sidebar {
    flex: 1;
    display: flex;
    min-width: 0;
}

.side-main {
    width: 689px;
    position: relative;
    padding: 20px 20px 0;
    overflow: hidden;
}

.side-top {
    display: flex;
    align-items: center;
    height: 51px;
    padding-left: 7px;
}

.side-icon {
    width: 38px;
    height: 38px;
    color: #222;
}

.side-input {
    width: 516px;
    height: 51px;
    margin-left: 22px;
    border: 2px solid #d4d4d4;
    border-top-color: #aaa;
    border-left-color: #aaa;
    border-bottom-color: #aaa;
    border-radius: 14px;
    display: flex;
    align-items: center;
    overflow: hidden;
}

.side-input-text {
    flex: 1;
    padding-left: 18px;
    white-space: nowrap;
}

.side-input-icon {
    width: 51px;
    height: 100%;
    border-left: 2px solid #d4d4d4;
    display: flex;
    align-items: center;
    justify-content: center;
    color: #333;
}

.side-icon-small {
    width: 38px;
    height: 38px;
}

.side-check {
    width: 28px;
    height: 28px;
    margin-left: 28px;
    color: #333;
}

.side-top + .panel-head {
    margin-top: 24px;
    height: 64px;
}

.color-panel {
    height: 370px;
    padding: 20px 21px 0 22px;
}

.wheel-row {
    display: flex;
}

.wheel {
    position: relative;
    width: 252px;
    height: 254px;
    margin-left: 151px;
    margin-right: 168px;
    border-radius: 50%;
    border: 1px solid #ddd;
    background:
        radial-gradient(closest-side, #737373 0%, rgba(115, 115, 115, 0) 100%),
        conic-gradient(#086d70, #0f1870 55deg, #2a0f72 90deg, #7a0f6a 125deg, #760d14 180deg, #775d0c 235deg, #1d7014 300deg, #086d70);
}

.wheel-dot {
    position: absolute;
    left: 50%;
    top: 50%;
    width: 11px;
    height: 13px;
    margin: -6px 0 0 -5px;
    border-radius: 50%;
    background: #fff;
    border: 2px solid #111;
}

.value-bar {
    position: relative;
    width: 35px;
    height: 255px;
    border: 2px solid #111;
    border-radius: 10px;
    background: linear-gradient(to bottom, #fafafa, #000);
}

.value-bar .wheel-dot {
    top: 55%;
    margin-left: -6px;
}

.swatch-row {
    display: flex;
    align-items: center;
    margin-top: 14px;
}

.swatch {
    width: 554px;
    height: 49px;
    background: #737373;
    border: 2px solid #ddd;
    border-radius: 12px;
}

.anim-dot {
    width: 10px;
    height: 12px;
    border-radius: 50%;
    background: #555;
    margin-left: 22px;
    flex: none;
}

.comp-panel {
    padding: 21px 0;
}

.side-row {
    display: grid;
    grid-template-columns: 232px 321px auto;
    column-gap: 24px;
    align-items: center;
    margin-bottom: 7px;
}

.side-row:last-child {
    margin-bottom: 0;
}

.side-row .anim-dot {
    margin-left: -2px;
}

.crop-panel {
    height: 100px;
    padding: 20px 0;
}

.scrollbar-side {
    right: 6px;
    top: 28px;
    height: 860px;
}

.side-tabs {
    flex: 1;
    background: #d8d8d8;
    padding-top: 13px;
    display: flex;
    flex-direction: column;
    gap: 13px;
}

.stab {
    width: 47px;
    background: #f4f4f4;
    color: #111;
    writing-mode: vertical-rl;
    text-orientation: sideways;
    transform: rotate(180deg);
    display: flex;
    align-items: center;
    justify-content: center;
    padding: 18px 0;
    border-radius: 8px 0 0 8px;
}

.stab-active {
    background: #54b3ff;
}

/* timeline */
.timeline {
    height: 62px;
    margin-top: 7px;
    background: #fff;
    display: flex;
    align-items: center;
    padding: 2px 0 0 21px;
    border-radius: 0 0 16px 16px;
    flex: none;
}

.ico-back {
    width: 32px;
    height: 40px;
}

.btn-pair {
    width: 316px;
    margin-right: 6px;
}

.pair-a {
    width: 118px;
    height: 100%;
    border-right: 1px solid #d4d4d4;
    display: flex;
    align-items: center;
    padding-left: 17px;
    gap: 13px;
    flex: none;
}

.pair-b {
    flex: 1;
    display: flex;
    align-items: center;
    justify-content: space-between;
    padding: 0 6px 0 19px;
}

.tl-spacer {
    flex: none;
    width: 1054px;
}

.btn-record {
    width: 100px;
    margin-right: 14px;
}

.rec-a {
    width: 50px;
    height: 100%;
    border-right: 1px solid #d4d4d4;
    display: flex;
    align-items: center;
    justify-content: center;
}

.rec-dot {
    width: 26px;
    height: 38px;
}

.rec-b {
    flex: 1;
    display: flex;
    justify-content: center;
}

.rec-b .chev {
    color: #999;
}

.btn-play {
    width: 305px;
    background: #e6e6e6;
}

.play-cell {
    width: 51px;
    height: 100%;
    border-left: 1px solid #d8d8d8;
    display: flex;
    align-items: center;
    justify-content: center;
    color: #333;
}

.play-cell:first-child {
    border-left: 0;
}

.play-cell svg {
    width: 40px;
    height: 34px;
}

.btn-frame {
    width: 189px;
    margin-right: 14px;
    justify-content: center;
}

.btn-range {
    width: 515px;
    margin-right: 22px;
}

.range-clock {
    width: 49px;
    height: 100%;
    display: flex;
    align-items: center;
    justify-content: center;
    border-right: 2px solid #d4d4d4;
    color: #333;
    flex: none;
}

.range-clock svg {
    width: 32px;
    height: 38px;
}

.range-cell {
    height: 100%;
    display: flex;
    align-items: center;
    justify-content: space-between;
    flex: none;
}

.range-start {
    width: 222px;
    padding: 0 37px 0 40px;
    border-right: 2px solid #d4d4d4;
}

.range-end {
    width: 240px;
    padding: 0 33px 0 40px;
}

/* status bar */
.statusbar {
    height: 48px;
    margin-top: 7px;
    background: #eee;
    display: flex;
    align-items: center;
    padding-left: 30px;
    padding-right: 25px;
    color: #333;
    flex: none;
}

.hint {
    display: flex;
    align-items: center;
    gap: 30px;
    flex: none;
}

.hint svg {
    width: 28px;
    height: 40px;
}

.hint-a {
    width: 630px;
}

.hint-b {
    width: 627px;
}

.status-info {
    margin-left: auto;
    white-space: nowrap;
}
```
